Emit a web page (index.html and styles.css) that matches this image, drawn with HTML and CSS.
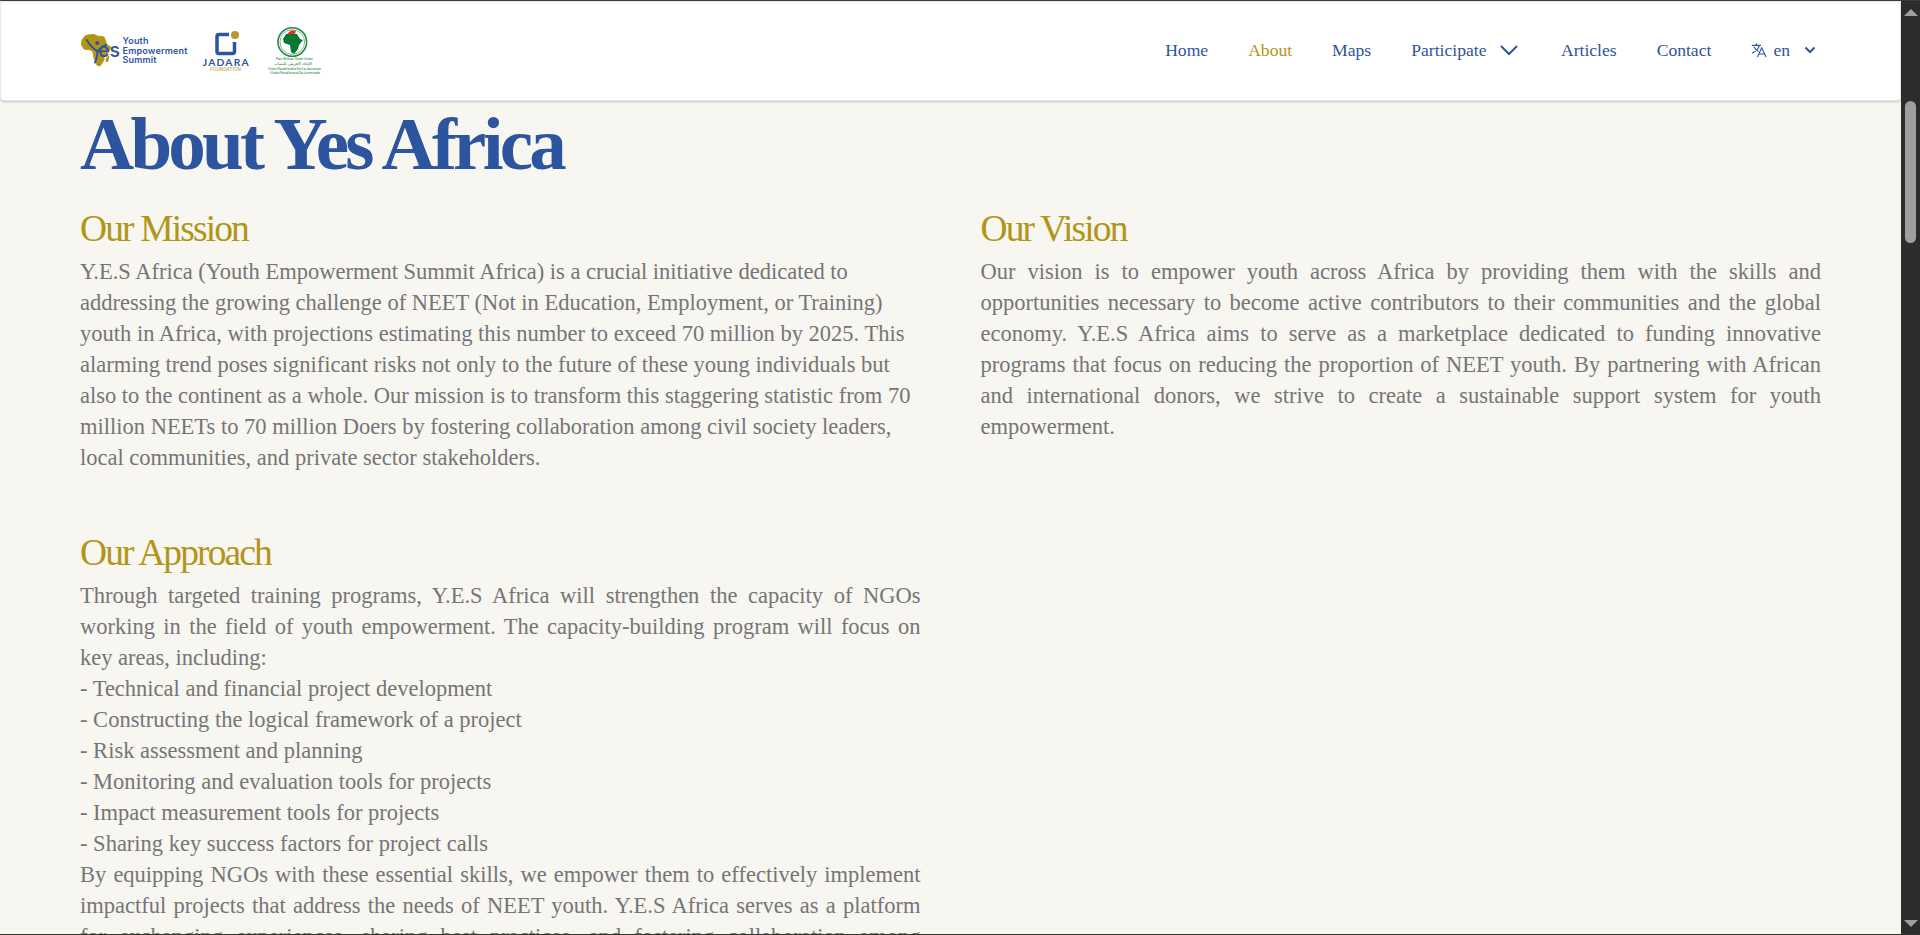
FILE: index.html
```html
<!DOCTYPE html>
<html lang="en">
<head>
<meta charset="utf-8">
<title>About Yes Africa</title>
<link rel="stylesheet" href="styles.css">
</head>
<body>
<div class="window">
  <div class="page">
    <header class="header">
      <div class="logos">
        <svg class="logo-yes" width="110" height="40" viewBox="0 0 110 40">
          <path fill="#b29517" stroke="#b29517" stroke-linejoin="round" d="M2 9 5 5 8 4 14 3.500 17 5 24 6 27 14 31 16 28 22 24 25 24 29 20 35 17 34 14 27 13 21 11 19 4 18 1.500 14ZM29 25 27.500 31 26 30 26.500 27Z"/>
          <circle cx="17.300" cy="12" r="2" fill="#2d549e"/>
          <path fill="none" stroke="#2d549e" stroke-width="1.900" stroke-linecap="round" d="M6.700 9Q11 16 17 20M26 14Q18.500 17 17.300 22Q17 28 15 31.500"/>
          <text x="18" y="26" class="yes-word" textLength="22" lengthAdjust="spacingAndGlyphs">es</text>
          <text x="42.500" y="13" class="yes-line" textLength="26">Youth</text>
          <text x="42.500" y="22.700" class="yes-line" textLength="65">Empowerment</text>
          <text x="42.500" y="32" class="yes-line" textLength="34">Summit</text>
        </svg>
        <svg class="logo-jadara" width="48" height="44" viewBox="0 0 48 44">
          <path fill="none" stroke="#2d549e" stroke-width="3.500" d="M27 5.500H17Q15 5.500 15 7.500V22.500Q15 24.500 17 24.500H30.500Q32.500 24.500 32.500 22.500V13"/>
          <circle cx="33" cy="6" r="4" fill="#b29a35"/>
          <text x="0.700" y="37" class="jadara-word" textLength="46">JADARA</text>
          <text x="8" y="41.800" class="jadara-sub" textLength="31">FOUNDATION</text>
        </svg>
        <svg class="logo-union" width="54" height="50" viewBox="0 0 54 50">
          <circle cx="25.300" cy="16" r="14.300" fill="none" stroke="#2b8749" stroke-width="1.600"/>
          <circle cx="25.300" cy="16" r="12.300" fill="none" stroke="#5da873" stroke-width=".8"/>
          <path fill="#08772f" d="M19 8 23 7 30 8 33 13 36 14 32 19 31 23 27 28 24 26 23 19 17 17 16 13Z"/>
          <path fill="#e52b28" d="M21 7 24 4.500 29 4.500 28 7.500 22 8.500Z"/>
          <text x="9" y="34" class="union-line" textLength="37">Pan-African Youth Union</text>
          <text x="7" y="39" class="union-line union-arabic" textLength="38">الإتحاد الإفريقي للشباب</text>
          <text x="1" y="43.500" class="union-line" textLength="53">Union Panafricaine De La Jeunesse</text>
          <text x="3" y="48.300" class="union-line" textLength="50">União Panafricana Da Juventude</text>
        </svg>
      </div>
      <nav class="nav">
        <a>Home</a>
        <a class="active">About</a>
        <a>Maps</a>
        <a class="participate">Participate
          <svg width="24" height="24" viewBox="0 0 24 24"><path d="m4 8 8 8 8-8" fill="none" stroke="currentColor" stroke-width="2"/></svg>
        </a>
        <a>Articles</a>
        <a>Contact</a>
        <a class="language">
          <svg width="16" height="16" viewBox="0 0 16 16"><path d="M.8 3.300H10M5.500 1.300v2M8.500 3.300Q7 8 1 11.300M2.800 4.800Q5 8.300 7.500 9.500M6.500 15 10.700 5.800 15 15M8 12h5.500" fill="none" stroke="currentColor" stroke-width="1.150"/></svg>
          <span>en</span>
          <svg class="caret" width="12" height="8" viewBox="0 0 12 8"><path d="m1.500 1.500 4.500 4.500 4.500-4.500" fill="none" stroke="currentColor" stroke-width="2"/></svg>
        </a>
      </nav>
    </header>
    <main class="content">
      <h1>About Yes Africa</h1>
      <div class="grid">
        <section>
          <h2>Our Mission</h2>
          <p class="left">Y.E.S Africa (Youth Empowerment Summit Africa) is a crucial initiative dedicated to addressing the growing challenge of NEET (Not in Education, Employment, or Training) youth in Africa, with projections estimating this number to exceed 70 million by 2025. This alarming trend poses significant risks not only to the future of these young individuals but also to the continent as a whole. Our mission is to transform this staggering statistic from 70 million NEETs to 70 million Doers by fostering collaboration among civil society leaders, local communities, and private sector stakeholders.</p>
        </section>
        <section>
          <h2>Our Vision</h2>
          <p>Our vision is to empower youth across Africa by providing them with the skills and opportunities necessary to become active contributors to their communities and the global economy. Y.E.S Africa aims to serve as a marketplace dedicated to funding innovative programs that focus on reducing the proportion of NEET youth. By partnering with African and international donors, we strive to create a sustainable support system for youth empowerment.</p>
        </section>
        <section>
          <h2>Our Approach</h2>
          <p>Through targeted training programs, Y.E.S Africa will strengthen the capacity of NGOs working in the field of youth empowerment. The capacity-building program will focus on key areas, including:<br>- Technical and financial project development<br>- Constructing the logical framework of a project<br>- Risk assessment and planning<br>- Monitoring and evaluation tools for projects<br>- Impact measurement tools for projects<br>- Sharing key success factors for project calls<br>By equipping NGOs with these essential skills, we empower them to effectively implement impactful projects that address the needs of NEET youth. Y.E.S Africa serves as a platform for exchanging experiences, sharing best practices, and fostering collaboration among stakeholders.</p>
        </section>
      </div>
    </main>
  </div>
  <div class="scrollbar">
    <svg width="14" height="7" viewBox="0 0 14 7"><path d="M0 7 7 0l7 7Z" fill="#9f9f9f"/></svg>
    <div class="thumb"></div>
    <svg class="down" width="14" height="7" viewBox="0 0 14 7"><path d="M0 0h14L7 7Z" fill="#9f9f9f"/></svg>
  </div>
</div>
</body>
</html>
```
FILE: styles.css
```css
* { box-sizing: border-box; }
body { margin: 0; font-family: "Liberation Serif", "Times New Roman", serif; }
.window {
  display: flex;
  height: 935px;
  overflow: hidden;
  border-top: 1px solid #3c3c3c;
  border-bottom: 1px solid #2f382c;
  background: #2c2c2c;
}
.page { width: 1901px; height: 933px; overflow: hidden; background: #f7f6f1; }
.header {
  display: flex;
  justify-content: space-between;
  align-items: center;
  height: 100px;
  padding: 0 84px 0 79px;
  background: #fff;
  border: 1px solid #e5e7eb;
  border-radius: 4px;
  box-shadow: 0 1px 3px rgba(0, 0, 0, .12), 0 1px 2px rgba(0, 0, 0, .08);
}
.logos { display: flex; align-items: center; }
.logo-yes { margin-right: 12px; }
.logo-jadara { margin-right: 17px; }
.logos text { font-family: Inter, "Liberation Sans", sans-serif; fill: #2d549e; }
.logos .yes-word { font-size: 20px; font-weight: 500; }
.logos .yes-line { font-size: 9px; font-weight: 600; }
.logos .jadara-word { font-family: Lato, sans-serif; font-size: 10.3px; font-weight: 700; }
.logos .jadara-sub { font-size: 4.6px; font-weight: 500; fill: #c3a548; }
.logos .union-line { font-size: 3.6px; font-weight: 500; fill: #3f9159; }
.logos .union-arabic { font-family: "DejaVu Sans", sans-serif; font-size: 4.3px; font-weight: 400; }
.nav { display: flex; align-items: center; gap: 40px; padding-bottom: 2px; font-size: 17.6px; line-height: 24px; color: #2d549e; }
.nav a { display: flex; align-items: center; }
.nav .active { color: #b29517; }
.participate { gap: 10.5px; }
.language span { margin-left: 6px; }
.caret { margin-left: 14px; }
.content { padding: 4px 80px 0; }
h1, h2, p { margin: 0; }
h1 { font-size: 75px; line-height: 77px; letter-spacing: -.05em; font-weight: 700; color: #2d549e; }
.grid { display: grid; grid-template-columns: 1fr 1fr; gap: 57px 60px; margin-top: 24px; }
h2 { margin-bottom: 4px; font-size: 37.5px; line-height: 46px; letter-spacing: -.05em; font-weight: 400; color: #b29517; }
p { font-size: 22.5px; line-height: 31px; color: #757575; text-align: justify; }
.left { text-align: left; }
.scrollbar { display: flex; flex-direction: column; align-items: center; width: 19px; padding: 8px 0 7px; background: #2c2c2c; }
.thumb { width: 11px; height: 142px; margin-top: 85px; border-radius: 6px; background: #9f9f9f; }
.down { margin-top: auto; }
```
